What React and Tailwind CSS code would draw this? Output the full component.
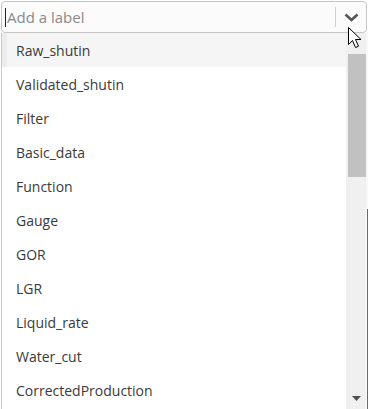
const labels = [
  'Raw_shutin',
  'Validated_shutin',
  'Filter',
  'Basic_data',
  'Function',
  'Gauge',
  'GOR',
  'LGR',
  'Liquid_rate',
  'Water_cut',
  'CorrectedProduction',
]

export default function App() {
  return (
    <div
      className="relative w-[368px] h-[409px] overflow-hidden bg-white flex flex-col"
      style={{ fontFamily: '"Open Sans", "Noto Sans", sans-serif' }}
    >
      {/* Champ de saisie */}
      <div className="mx-[1px] mt-[1px] h-[32px] shrink-0 flex items-center border border-[#c6c6c6] rounded-[4px] bg-[#fbfbfb]">
        <div className="flex-1 flex items-center pl-[3px]">
          <span className="w-px h-[19px] bg-[#222]" />
          <span className="text-[15px] text-[#8a8a8a] pl-[1px] leading-none">Add a label</span>
        </div>
        <span className="w-px h-[20px] bg-[#cfcfcf]" />
        <div className="w-[30px] flex items-center justify-center">
          <svg width="15" height="9" viewBox="0 0 15 9">
            <path d="M1.5 1.5l6 5.5 6-5.5" fill="none" stroke="#555" strokeWidth="2.6" />
          </svg>
        </div>
      </div>

      {/* Liste déroulante */}
      <div className="flex flex-1 min-h-0 ml-[1px]">
        <div className="flex-1 flex flex-col border-l border-[#c9c9c9] bg-white">
          {labels.map((l, i) => (
            <div
              key={l}
              className={
                i === 0
                  ? 'h-[34px] shrink-0 flex items-center pl-[9px] border-l-[5px] border-l-[#ececec] bg-[#f5f5f5] text-[14px] text-[#3a3a3a]'
                  : 'h-[34px] shrink-0 flex items-center pl-[14px] text-[14px] text-[#3a3a3a]'
              }
            >
              {l}
            </div>
          ))}
        </div>

        {/* Barre de défilement */}
        <div className="w-[20px] shrink-0 bg-[#f0f0f0] flex flex-col">
          <div className="h-[21px]" />
          <div className="ml-[2px] h-[123px] bg-[#c1c1c1]" />
          <div className="flex-1" />
          <div className="h-[22px] flex items-center justify-center pl-[1px]">
            <svg width="9" height="5" viewBox="0 0 9 5">
              <path d="M0 0h9L4.5 5z" fill="#505050" />
            </svg>
          </div>
        </div>
        <div className="w-[2px] shrink-0 flex flex-col">
          <div className="h-[176px] bg-[#f7f7f7]" />
          <div className="flex-1 border-r border-[#666]" />
        </div>
      </div>

      {/* Pointeur de la souris */}
      <svg className="absolute left-[348px] top-[27px]" width="14" height="22" viewBox="0 0 14 22">
        <path d="M0.5 0.5v17l4-4 3 7 3-1.3-3-6.7h5.5z" fill="#fff" stroke="#000" strokeWidth="1" />
      </svg>
    </div>
  )
}
